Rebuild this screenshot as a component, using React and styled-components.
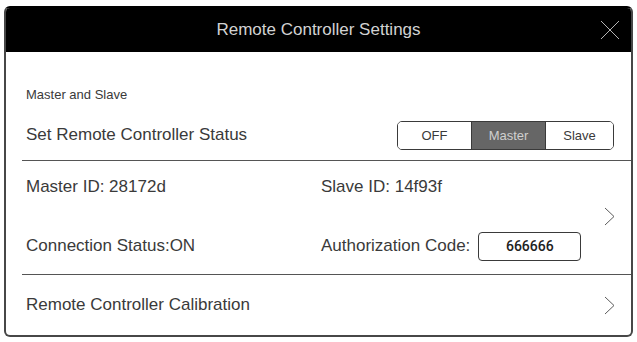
import React from "react";
import styled, { createGlobalStyle } from "styled-components";

const Global = createGlobalStyle`
  html, body { margin: 0; padding: 0; background: #fff; }
  body { font-family: "Liberation Sans", Arial, Helvetica, sans-serif; color: #3a3a3a; }
  * { box-sizing: border-box; }
`;

const Page = styled.div`
  padding: 6px 4px 0 4px;
`;

const Dialog = styled.div`
  width: 629px;
  height: 331px;
  border: 2px solid #474747;
  border-top-color: #000;
  border-radius: 6px;
  overflow: hidden;
  display: flex;
  flex-direction: column;
  background: #fff;
`;

const Header = styled.div`
  height: 44px;
  background: #000;
  display: grid;
  grid-template-columns: 1fr auto 1fr;
  align-items: center;
  padding: 0 11px 0 11px;
  flex-shrink: 0;
`;

const Title = styled.div`
  grid-column: 2;
  font-size: 17px;
  color: #d2d2d2;
`;

const Close = styled.button`
  grid-column: 3;
  justify-self: end;
  width: 20px;
  height: 20px;
  padding: 0;
  border: 0;
  background: transparent;
  display: flex;
  align-items: center;
  justify-content: center;
  cursor: pointer;
`;

const Section = styled.div`
  padding: ${(p) => p.$pad || "0"};
  height: ${(p) => p.$h}px;
  flex-shrink: 0;
  display: flex;
  flex-direction: column;
`;

const Caption = styled.div`
  font-size: 13px;
  line-height: 16px;
  color: #3a3a3a;
  padding-left: 20px;
`;

const StatusRow = styled.div`
  margin-top: 17px;
  height: 30px;
  display: flex;
  align-items: center;
  justify-content: space-between;
  padding: 0 17px 0 20px;
`;

const Label = styled.div`
  font-size: 17px;
  line-height: 20px;
  color: #3a3a3a;
  white-space: nowrap;
`;

const Segmented = styled.div`
  display: flex;
  height: 29px;
  border: 1px solid #3a3a3a;
  border-radius: 5px;
  overflow: hidden;
`;

const Segment = styled.button`
  width: ${(p) => p.$w}px;
  height: 100%;
  border: 0;
  border-left: ${(p) => (p.$first ? "0" : "1px solid #3a3a3a")};
  background: ${(p) => (p.$active ? "#666" : "#fff")};
  color: ${(p) => (p.$active ? "#cfcfcf" : "#3a3a3a")};
  font-family: inherit;
  font-size: 13px;
  padding: 0;
`;

const Divider = styled.div`
  height: 1px;
  background: #555;
  margin-left: 16px;
  flex-shrink: 0;
`;

const LinkRow = styled.div`
  flex: 1;
  display: flex;
  align-items: center;
  padding: ${(p) => p.$pad || "0"};
  padding-left: 20px;
  padding-right: 16px;
`;

const InfoGrid = styled.div`
  flex: 1;
  display: grid;
  grid-template-columns: 295px 1fr;
  grid-template-rows: 30px 30px;
  row-gap: 29px;
  align-items: center;
`;

const Field = styled.div`
  display: flex;
  align-items: center;
  gap: 8px;
`;

const CodeBox = styled.div`
  width: 103px;
  height: 29px;
  border: 1px solid #3a3a3a;
  border-radius: 4px;
  display: flex;
  align-items: center;
  justify-content: center;
  font-family: Roboto, "Liberation Sans", Arial, sans-serif;
  font-size: 14px;
  font-weight: 500;
  color: #222;
`;

const Spacer = styled.div`
  flex: 1;
`;

const Chevron = () => (
  <svg width="11" height="19" viewBox="0 0 11 19" fill="none">
    <path d="M1 1 L10 9.5 L1 18" stroke="#4a4a4a" strokeWidth="0.9" />
  </svg>
);

export default function App() {
  return (
    <>
      <Global />
      <Page>
        <Dialog>
          <Header>
            <Title>Remote Controller Settings</Title>
            <Close aria-label="close">
              <svg width="20" height="20" viewBox="0 0 20 20">
                <path d="M1 1 L19 19 M19 1 L1 19" stroke="#c8c8c8" strokeWidth="0.9" />
              </svg>
            </Close>
          </Header>
          <Section $h={108} $pad="35px 0 0 0">
            <Caption>Master and Slave</Caption>
            <StatusRow>
              <Label>Set Remote Controller Status</Label>
              <Segmented>
                <Segment $w={73} $first>OFF</Segment>
                <Segment $w={74} $active>Master</Segment>
                <Segment $w={68}>Slave</Segment>
              </Segmented>
            </StatusRow>
          </Section>
          <Divider />
          <Section $h={113}>
            <LinkRow $pad="11px 0 13px 0">
              <InfoGrid>
                <Label>Master ID: 28172d</Label>
                <Label>Slave ID: 14f93f</Label>
                <Label>Connection Status:ON</Label>
                <Field>
                  <Label>Authorization Code:</Label>
                  <CodeBox>666666</CodeBox>
                </Field>
              </InfoGrid>
              <Chevron />
            </LinkRow>
          </Section>
          <Divider />
          <LinkRow>
            <Label>Remote Controller Calibration</Label>
            <Spacer />
            <Chevron />
          </LinkRow>
        </Dialog>
      </Page>
    </>
  );
}
